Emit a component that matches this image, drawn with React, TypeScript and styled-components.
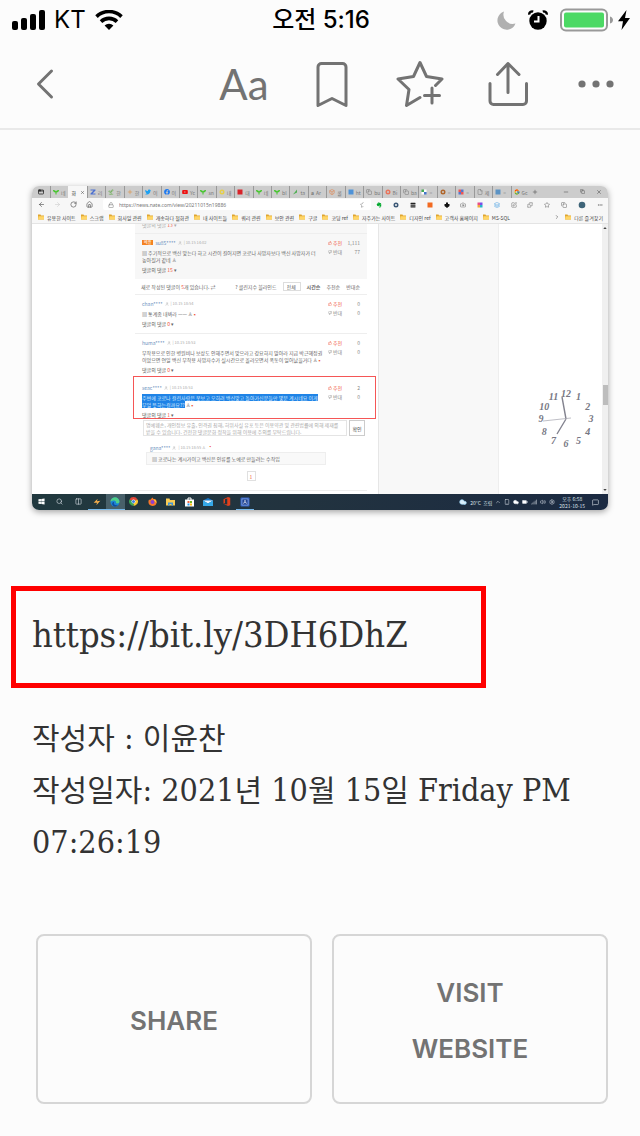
import React from "react";
import styled, { createGlobalStyle, css } from "styled-components";
import {
  AppWindow, ArrowLeft, ArrowRight, BatteryFull, Camera, ChevronRight, ChevronUp, Cloud, Copy, File,
  Home, Layers, Lock, Menu, MessageSquare, Minus, MoreHorizontal, Plus, Puzzle, RotateCw, Search,
  Settings, Signal, Smartphone, SquarePen, Star, StarHalf, ThumbsDown, ThumbsUp, User, Volume2, X,
  Columns2, Box, Sprout,
} from "lucide-react";
import { FaEvernote, FaFacebook, FaTwitter, FaWindows, FaYoutube } from "react-icons/fa";
import { FcGoogle } from "react-icons/fc";

const ink = "#737373";

const Global = createGlobalStyle`
  *, *::before, *::after { box-sizing: border-box; }
  body { margin: 0; background: #fcfcfc; color: #333; font-family: Inter, "Noto Sans CJK KR", sans-serif; }
  button, input, select, textarea { font: inherit; color: inherit; border: 0; padding: 0; margin: 0; background: none; border-radius: 0; }
  a { color: inherit; text-decoration: none; }
  svg { display: block; flex: none; }
`;

/* ---------- status bar ---------- */

const StatusBar = styled.header`
  display: grid;
  grid-template-columns: 1fr auto 1fr;
  align-items: center;
  height: 40px;
  padding: 0 10px 0 12px;
  color: #000;
  font-size: 24px;
  line-height: 40px;
`;
const StatusGroup = styled.div<{ $end?: boolean }>`
  display: flex;
  align-items: center;
  gap: ${(p) => (p.$end ? 12 : 9)}px;
  justify-content: ${(p) => (p.$end ? "flex-end" : "flex-start")};
`;
const Time = styled.time`
  font-weight: 500;
`;
const Power = styled.span`
  display: flex;
  align-items: center;
  gap: 5px;
`;

/* ---------- toolbar ---------- */

const Toolbar = styled.nav`
  display: flex;
  justify-content: space-between;
  border-bottom: 2px solid #e9e9e9;
`;
const ToolGroup = styled.div`
  display: flex;
`;
const ToolButton = styled.button`
  display: flex;
  align-items: center;
  justify-content: center;
  width: 88px;
  height: 88px;
  color: ${ink};
`;
const TextSizeLabel = styled.span`
  font-family: Lato, sans-serif;
  font-weight: 400;
  font-size: 42px;
  line-height: 48px;
`;
const ToolSvg = styled.svg.attrs({ viewBox: "0 0 48 48", width: 48, height: 48, fill: "none", stroke: "currentColor", strokeWidth: 3, strokeLinecap: "round", strokeLinejoin: "round" })``;

/* ---------- article ---------- */

const Article = styled.main`
  padding: 56px 0 32px;
`;
const Shot = styled.figure`
  margin: 0 32px 76px;
  border-radius: 7px;
  overflow: hidden;
  background: #fff;
  box-shadow: 0 2px 6px rgba(0, 0, 0, 0.35);
  font-family: "Noto Sans CJK KR", sans-serif;
  font-size: 5px;
  line-height: 7px;
  color: #666;
  white-space: nowrap;
`;
const LinkBox = styled.p`
  width: 475px;
  max-width: calc(100% - 22px);
  margin: 0 11px 24px;
  padding: 18px 16px 22px;
  border: 5px solid #f00;
`;
const ShortLink = styled.a`
  display: block;
  font-family: "DejaVu Serif Condensed", "DejaVu Serif", serif;
  font-size: 36px;
  line-height: 52px;
`;
const Byline = styled.p`
  margin: 0 32px;
  font-family: "DejaVu Serif Condensed", "DejaVu Serif", serif;
  font-size: 32px;
  line-height: 52px;
`;
const Ko = styled.span`
  font-family: "Noto Sans CJK KR", sans-serif;
  font-size: 30px;
  font-weight: 400;
  line-height: 1;
`;
const Actions = styled.div`
  display: grid;
  grid-template-columns: 1fr 1fr;
  gap: 20px;
  margin: 66px 32px 0 36px;
`;
const ActionButton = styled.button`
  min-height: 170px;
  padding: 4px 64px 0;
  border: 2px solid #d6d6d6;
  border-radius: 8px;
  color: ${ink};
  font-weight: 600;
  font-size: 26px;
  line-height: 56px;
`;

/* ---------- captured desktop ---------- */

const TabStrip = styled.div`
  display: flex;
  align-items: center;
  height: 12px;
  background: #ccc;
`;
const WindowMenu = styled.span`
  display: flex;
  justify-content: center;
  width: 18px;
  color: #222;
`;
const TabList = styled.div`
  display: flex;
  flex: 1;
  height: 12px;
`;
const TabItem = styled.button<{ $active?: boolean }>`
  display: flex;
  flex: 1 1 0;
  min-width: 0;
  overflow: hidden;
  align-items: center;
  gap: 2px;
  padding-left: 2px;
  height: 12px;
  border-left: 1px solid #999;
  color: #777;
  ${(p) => p.$active && css`background: #f7f7f7; border-color: #f7f7f7; color: #333; gap: 4px;`}
`;
const WindowControls = styled.div`
  display: flex;
  align-items: center;
  justify-content: space-between;
  width: 79px;
  padding: 0 6px 0 3px;
  color: #444;
`;
const ControlSet = styled.span`
  display: flex;
  gap: 11px;
`;
const AddressRow = styled.div`
  display: flex;
  align-items: center;
  height: 13px;
  background: #f7f7f7;
`;
const NavSet = styled.div`
  display: flex;
  justify-content: space-around;
  width: 67px;
  padding: 0 2px;
  color: #444;
`;
const AddressField = styled.label`
  display: flex;
  flex: 1;
  align-items: center;
  gap: 5px;
  height: 11px;
  padding: 0 5px;
  margin-left: 4px;
  background: #fff;
  border-radius: 2px;
  color: #777;
`;
const AddressInput = styled.input`
  flex: 1;
  min-width: 0;
  height: 9px;
  font-family: "Noto Sans", sans-serif;
`;
const Extensions = styled.div`
  display: flex;
  justify-content: space-around;
  align-items: center;
  width: 237px;
  color: #666;
`;
const BookmarkRow = styled.div`
  display: flex;
  align-items: center;
  justify-content: space-between;
  height: 13px;
  padding: 0 5px 0 6px;
  background: #f7f7f7;
  border-bottom: 1px solid #e4e4e4;
  color: #444;
`;
const BookmarkSet = styled.div`
  display: flex;
  align-items: center;
  gap: 5px;
`;
const BookmarkLink = styled.a`
  display: flex;
  align-items: center;
  gap: 3px;
`;
const Viewport = styled.div`
  display: grid;
  grid-template-columns: 103fr 232fr 11fr 121fr 103fr 6px;
  height: 270px;
  overflow: hidden;
  background: #fff;
`;
const Comments = styled.section`
  grid-column: 2;
  min-width: 0;
`;
const Pinned = styled.div`
  padding: 1px 0 3px;
  background: #f7f7f7;
`;
const PreviousReplies = styled.div`
  margin-top: -4px;
  padding: 0 7px 5px;
  border-bottom: 1px solid #eee;
  color: #aaa;
`;
const FilterBar = styled.div`
  display: flex;
  align-items: center;
  justify-content: space-between;
  height: 16px;
  padding: 0 7px 0 6px;
  border-bottom: 1px solid #eee;
`;
const FilterSet = styled.div`
  display: flex;
  align-items: center;
  gap: 6px;
`;
const FilterSelect = styled.select`
  appearance: none;
  width: 18px;
  height: 9px;
  padding-left: 3px;
  border: 1px solid #ddd;
  line-height: 7px;
`;
const Entry = styled.article<{ $boxed?: boolean; $last?: boolean }>`
  display: flex;
  justify-content: space-between;
  padding: 5px 7px 6px;
  border-bottom: 1px solid #eee;
  ${(p) => p.$last && css`padding-bottom: 3px; border-bottom: 0;`}
  ${(p) => p.$boxed && css`
    margin: 0 -9px 0 -2px;
    padding: 7px 15px 0 8px;
    border: 1px solid #f55656;
  `}
`;
const EntryBody = styled.div`
  display: grid;
  gap: 3px;
  min-width: 0;
`;
const Meta = styled.div`
  display: flex;
  align-items: center;
  gap: 2px;
  color: #aaa;
  font-size: 4px;
`;
const Author = styled.span`
  color: #6b8fbd;
  font-size: 5px;
`;
const Badge = styled.span`
  padding: 0 2px;
  background: #f58220;
  color: #fff;
  line-height: 5px;
`;
const Said = styled.p`
  margin: 0;
`;
const Hot = styled.span`
  color: #f0563c;
`;
const Marked = styled.mark`
  background: #1f83e6;
  color: #d7eaff;
`;
const Votes = styled.div`
  display: grid;
  grid-template-columns: auto auto;
  justify-content: space-between;
  align-content: start;
  width: 32px;
  margin-top: -1px;
  line-height: 9px;
  text-align: right;
  color: #888;
`;
const Vote = styled.span<{ $up?: boolean }>`
  display: flex;
  align-items: center;
  gap: 1px;
  color: ${(p) => (p.$up ? "#f0563c" : "#888")};
`;
const ReplyForm = styled.form`
  display: flex;
  gap: 2px;
  margin: 1px 2px 8px 8px;
`;
const ReplyText = styled.textarea`
  flex: 1;
  height: 16px;
  padding: 0 2px;
  border: 1px solid #e4e4e4;
  resize: none;
  overflow: hidden;
  font-size: 5px;
  line-height: 7px;
  color: #aaa;
`;
const ReplyButton = styled.button`
  width: 16px;
  height: 16px;
  border: 1px solid #ccc;
  color: #444;
`;
const ReplyMeta = styled.div`
  padding-left: 15px;
`;
const ReplyBubble = styled.div`
  margin: 1px 41px 6px 11px;
  padding: 2px 5px;
  height: 13px;
  border: 1px solid #eee;
  background: #f9f9f9;
`;
const Pager = styled.div`
  display: flex;
  justify-content: center;
  padding-bottom: 9px;
  border-bottom: 1px solid #eee;
`;
const PageButton = styled.button`
  width: 9px;
  height: 10px;
  border: 1px solid #e0e0e0;
  color: #f0563c;
`;
const Aside = styled.div`
  grid-column: 4;
  background: #f8f8f8;
  border-left: 1px solid #e6e6e6;
  border-right: 1px solid #eee;
`;
const ClockColumn = styled.div`
  display: flex;
  justify-content: flex-end;
  padding: 165px 6px 0 0;
`;
const ScrollTrack = styled.div`
  display: flex;
  flex-direction: column;
  align-items: center;
  justify-content: space-between;
  padding: 2px 0;
  background: #f0f0f0;
`;
const ScrollThumb = styled.span`
  width: 5px;
  height: 20px;
  margin-top: 72px;
  background: #bdbdbd;
`;
const Taskbar = styled.div`
  display: flex;
  align-items: center;
  justify-content: space-between;
  height: 16px;
  background: linear-gradient(90deg, #21393f, #22333f 45%, #1b2a42);
  color: #dde3ea;
`;
const TaskSet = styled.div`
  display: flex;
  width: 222px;
`;
const TaskButton = styled.button<{ $open?: boolean; $active?: boolean }>`
  display: flex;
  flex: 1;
  align-items: center;
  justify-content: center;
  height: 16px;
  border-bottom: 1px solid ${(p) => (p.$open ? "#76b9ed" : "transparent")};
  background: ${(p) => (p.$active ? "#48606a" : "transparent")};
`;
const Tray = styled.div`
  display: flex;
  align-items: center;
  gap: 3px;
  padding-right: 9px;
`;
const TrayClock = styled.span`
  margin: 0 4px 0 1px;
  text-align: center;
`;

const Glyph = ({ d, color = "currentColor", size = 6 }: { d: string; color?: string; size?: number }) => (
  <svg width={size} height={size} viewBox="0 0 12 12" aria-hidden="true"><path d={d} fill={color} /></svg>
);
const Folder = () => (
  <svg width="6" height="6" viewBox="0 0 12 12" aria-hidden="true">
    <path d="M0 1h5l1 2h6v8H0z" fill="#dfa52f" /><path d="M1 4.5h11V11H0z" fill="#ffd667" />
  </svg>
);
const Dot = ({ color }: { color: string }) => <Glyph color={color} d="M6 1a5 5 0 100 10A5 5 0 006 1zm0 3a2 2 0 110 4 2 2 0 010-4z" />;
const Square = ({ color }: { color: string }) => <Glyph color={color} d="M1 1h10v10H1z" />;
const Leaf = () => <Glyph color="#45c52c" d="M5 11V7C2 7 0 5 0 2c3 0 5 1 6 3 1-2 3-3 6-3 0 3-2 5-5 5v4z" />;
const Tiles = ({ colors }: { colors: string[] }) => (
  <svg width="6" height="6" viewBox="0 0 12 12" aria-hidden="true">
    {colors.map((c, i) => <rect key={i} x={1 + (i % 2) * 5} y={1 + (i >> 1) * 5} width="5" height="5" fill={c} />)}
  </svg>
);

const tabs: [React.ReactNode, string][] = [
  [<Leaf />, "네"],
  [null, "화"],
  [<Glyph color="#4a6fd0" d="M1 1h10v2L5 9h6v2H1V9l6-6H1z" />, "리"],
  [<Sprout size={6} color="#58a83c" />, "한"],
  [<Plus size={6} color="#e08a2c" />, "한"],
  [<FaTwitter size={6} color="#1da1f2" />, "이"],
  [<FaFacebook size={6} color="#1877f2" />, "이"],
  [<FaYoutube size={6} color="#e11" />, "Yc"],
  [<Leaf />, "sn"],
  [<Dot color="#e6cf4b" />, "내"],
  [<Square color="#d8232a" />, "대"],
  [<Leaf />, "네"],
  [<Leaf />, "bl"],
  [<Glyph color="#4caf50" d="M2 11L10 1v6z" />, "ta"],
  [<b>a</b>, "Ar"],
  [<Box size={6} color="#e37b3c" />, "쿨"],
  [<Square color="#4f93d8" />, "ht"],
  [<Copy size={6} />, "bu"],
  [<Dot color="#e9755c" />, "Bi"],
  [<Copy size={6} />, "ba"],
  [<Tiles colors={["#4a5", "#fff", "#fff", "#47c"]} />, "="],
  [<Dot color="#b0662b" />, "="],
  [<Tiles colors={["#e55", "#57c", "#57c", "#e55"]} />, "="],
  [<File size={6} />, "제"],
  [<Square color="#5c93c4" />, "="],
  [<FcGoogle size={6} />, "Gc"],
];

const bookmarks = ["유용한 사이트", "스크랩", "회사일 관련", "개송하다 철화관", "내 사이트들", "쿼리 관련", "보안 관련", "구글", "코딩 ref", "자주가는 사이트", "디자인 ref", "고객사 홈페이지", "MS-SQL"];

const extensions: React.ReactNode[] = [
  <FaEvernote size={6} color="#00a82d" />, <Dot color="#3c5876" />, <Menu size={6} color="#222" strokeWidth={5} />,
  <Square color="#f26a21" />, <Glyph color="#111" d="M4 1h4v3h3v4l-5 4-5-4V4h3z" />, <Camera size={6} />,
  <Tiles colors={["#e84d8a", "#7b4de8", "#f2a93b", "#28b5c9"]} />, <Layers size={6} color="#3f9be0" />, <SquarePen size={6} />,
  <Puzzle size={6} />, <Star size={6} />, <Copy size={6} />,
  <Glyph size={8} color="#3e6478" d="M6 1a5 5 0 100 10A5 5 0 006 1z" />, <MoreHorizontal size={6} />,
];

const ClockFace = () => (
  <svg width="60" height="60" viewBox="0 0 60 60" role="img" aria-label="시계">
    <g fill="#777783" fontFamily="Liberation Serif, serif" fontSize="10" fontWeight="700" fontStyle="italic" textAnchor="middle">
      {Array.from({ length: 12 }, (_, i) => {
        const a = ((i + 1) * Math.PI) / 6;
        return <text key={i} x={30 + 25 * Math.sin(a)} y={33 - 25 * Math.cos(a)}>{i + 1}</text>;
      })}
    </g>
    <path d="M30 30L26 8M30 30l-9 15" stroke="#83838f" strokeWidth="1.4" />
    <path d="M35 29L7 32" stroke="#a4a4ae" strokeWidth=".7" />
  </svg>
);

interface CommentProps {
  author: string;
  date: string;
  replies: string;
  up: string;
  down: string;
  best?: boolean;
  boxed?: boolean;
  last?: boolean;
  children: React.ReactNode;
}
const Comment = ({ author, date, replies, up, down, best, boxed, last, children }: CommentProps) => (
  <Entry $boxed={boxed} $last={last}>
    <EntryBody>
      <Meta>
        {best && <Badge>베플</Badge>}
        <Author>{author}</Author>
        <User size={4} /> | {date}
      </Meta>
      <Said>{children}</Said>
      <div>댓글의 댓글 <Hot>{replies}</Hot> ▾</div>
    </EntryBody>
    <Votes>
      <Vote $up><ThumbsUp size={4} />추천</Vote><span>{up}</span>
      <Vote><ThumbsDown size={4} />반대</Vote><span>{down}</span>
    </Votes>
  </Entry>
);

const DesktopShot = () => (
  <Shot>
    <TabStrip>
      <WindowMenu><AppWindow size={6} strokeWidth={3} /></WindowMenu>
      <TabList>
        {tabs.map(([icon, label], i) => (
          <TabItem key={i} $active={i === 1}>{icon}{label}{i === 1 && <X size={5} />}</TabItem>
        ))}
      </TabList>
      <WindowControls>
        <Plus size={6} />
        <ControlSet><Minus size={6} /><Copy size={5} /><X size={6} /></ControlSet>
      </WindowControls>
    </TabStrip>
    <AddressRow>
      <NavSet><ArrowLeft size={7} /><ArrowRight size={7} color="#ccc" /><RotateCw size={7} /><Home size={7} /></NavSet>
      <AddressField>
        <Lock size={6} />
        <AddressInput aria-label="주소" defaultValue="https://news.nate.com/view/20211015n19886" />
        <StarHalf size={6} />
      </AddressField>
      <Extensions>{extensions.map((e, i) => <React.Fragment key={i}>{e}</React.Fragment>)}</Extensions>
    </AddressRow>
    <BookmarkRow>
      <BookmarkSet>
        {bookmarks.map((b) => <BookmarkLink href="#" key={b}><Folder />{b}</BookmarkLink>)}
      </BookmarkSet>
      <BookmarkSet>
        <ChevronRight size={6} />
        <BookmarkLink href="#"><Folder />다른 즐겨찾기</BookmarkLink>
      </BookmarkSet>
    </BookmarkRow>
    <Viewport>
      <Comments>
        <Pinned>
          <PreviousReplies>댓글의 댓글 <Hot>13</Hot> ▾</PreviousReplies>
          <Comment best last author="su85****" date="10.15 14:02" replies="15" up="1,111" down="77">
            ▤ 주기적으로 백신 맞는다 하고 시간이 길어지면 코로나 사망자보다 백신 사망자가 더<br />높아질거 같네 ♙
          </Comment>
        </Pinned>
        <FilterBar>
          <span>새로 작성된 댓글이 <Hot>5</Hot>개 있습니다. ⇄</span>
          <FilterSet>
            <span>? 클린지수 블라인드</span>
            <FilterSelect aria-label="클린지수"><option>전체</option></FilterSelect>
            <b>시간순</b><span>추천순</span><span>반대순</span>
          </FilterSet>
        </FilterBar>
        <Comment author="chan****" date="10.15 18:54" replies="0" up="0" down="0">
          ▤ 통계좀 내봐라 ㅡㅡ ♙<Hot>▪</Hot>
        </Comment>
        <Comment last author="huma****" date="10.15 18:53" replies="0" up="0" down="0">
          부작용으로 인한 병원비나 보상도 안해주면서 맞으라고 강요하지 말아라 지금 박근혜정권<br />
          이었으면 연일 백신 부작용 사망자수가 실시간으로 올라오면서 폭동이 일어났을거다 ♙<Hot>▪</Hot>
        </Comment>
        <Comment boxed author="seac****" date="10.15 18:53" replies="1" up="2" down="0">
          <Marked>주변에 코로나 걸린사람은 못보고 오히려 백신맞고 돌아가신분들만 몇분 계시네요 이게<br />무얼 뜻하는걸까요??</Marked> ♙<Hot>▪</Hot>
        </Comment>
        <ReplyForm onSubmit={(e) => e.preventDefault()}>
          <ReplyText aria-label="댓글" defaultValue="명예훼손, 개인정보 유출, 인격권 침해, 허위사실 유포 등은 이용약관 및 관련법률에 의해 제재를 받을 수 있습니다. 건전한 댓글문화 정착을 위해 이용에 주의를 부탁드립니다." />
          <ReplyButton>확인</ReplyButton>
        </ReplyForm>
        <ReplyMeta>
          <Meta><Author>gana****</Author><User size={4} /> | 10.15 18:55 ♙<Hot>▪</Hot></Meta>
        </ReplyMeta>
        <ReplyBubble>▤ 코로나는 계시가이고 백신은 인류를 노예로 만들려는 수작임</ReplyBubble>
        <Pager><PageButton>1</PageButton></Pager>
      </Comments>
      <Aside />
      <ClockColumn><ClockFace /></ClockColumn>
      <ScrollTrack>
        <Glyph size={4} color="#444" d="M6 3l5 6H1z" />
        <ScrollThumb />
        <Glyph size={4} color="#444" d="M6 9L1 3h10z" />
      </ScrollTrack>
    </Viewport>
    <Taskbar>
      <TaskSet>
        <TaskButton aria-label="시작"><FaWindows size={7} color="#fff" /></TaskButton>
        <TaskButton aria-label="검색"><Search size={7} /></TaskButton>
        <TaskButton aria-label="작업 보기"><Columns2 size={7} /></TaskButton>
        <TaskButton aria-label="편집기" $open><Glyph size={8} color="#f5ae4d" d="M1 7l6-6-1 4 5-1-6 7 1-4z" /></TaskButton>
        <TaskButton aria-label="Edge" $open $active>
          <svg width="10" height="10" viewBox="0 0 20 20"><circle cx="10" cy="10" r="9" fill="#1b83d3" /><path d="M1 10a9 9 0 0118-1c0 4-5 5-7 3 1-3-2-6-5-5-3 0-5 2-6 3z" fill="#4fd08a" /><path d="M8 10c-2 4 2 8 8 6-2 3-6 4-9 2-4-3-3-8 1-8z" fill="#104a9e" /></svg>
        </TaskButton>
        <TaskButton aria-label="Chrome">
          <svg width="9" height="9" viewBox="0 0 18 18"><path d="M9 9L1 5a9 9 0 0116 0z" fill="#e4483a" /><path d="M9 9l8-4a9 9 0 01-8 13z" fill="#f9c72f" /><path d="M9 9v9A9 9 0 011 5z" fill="#3ba657" /><circle cx="9" cy="9" r="4" fill="#fff" /><circle cx="9" cy="9" r="3" fill="#3c7de0" /></svg>
        </TaskButton>
        <TaskButton aria-label="Firefox">
          <svg width="9" height="9" viewBox="0 0 18 18"><path d="M2 5l2 1 5-5 2 3 5 1c4 9-2 13-7 13C2 18-1 12 2 5z" fill="#f5762b" /><circle cx="9" cy="10" r="4" fill="#8a3fd0" /><path d="M11 4c5 2 6 5 6 8l-4-4z" fill="#ffd23c" /></svg>
        </TaskButton>
        <TaskButton aria-label="탐색기">
          <svg width="9" height="8" viewBox="0 0 18 16"><path d="M0 1h7l1 3h10v11H0z" fill="#f8cc55" /><path d="M4 9h10v6h-3v-3H7v3H4z" fill="#3f96dc" /></svg>
        </TaskButton>
        <TaskButton aria-label="스토어">
          <svg width="9" height="10" viewBox="0 0 18 20"><path d="M6 6V2h6v4" fill="none" stroke="#fff" strokeWidth="2" /><path d="M0 5h18v14H0z" fill="#fff" /><path d="M5 8h4v4H5z" fill="#e64" /><path d="M10 8h4v4h-4z" fill="#7b2" /><path d="M5 13h4v4H5z" fill="#29e" /><path d="M10 13h4v4h-4z" fill="#fb1" /></svg>
        </TaskButton>
        <TaskButton aria-label="메일">
          <svg width="10" height="8" viewBox="0 0 20 16"><path d="M0 5l10-5 10 5v11H0z" fill="#1976c5" /><path d="M0 5h20L10 11z" fill="#eef6fc" /><path d="M0 5l10 6 10-6v11H0z" fill="#35a9e8" /></svg>
        </TaskButton>
        <TaskButton aria-label="Office"><Glyph size={9} color="#e0401c" d="M2 3l6-3 3 1v10l-3 1-6-3 5 1V2L4 3v5L2 9z" /></TaskButton>
        <TaskButton aria-label="사전" $open>
          <svg width="10" height="10" viewBox="0 0 20 20"><rect x="1" y="1" width="18" height="18" rx="2" fill="#3563c4" /><rect x="4" y="4" width="12" height="12" fill="#1b3f91" stroke="#b9cdf5" /><path d="M7 14l3-8 3 8M8 11h4" fill="none" stroke="#fff" /></svg>
        </TaskButton>
      </TaskSet>
      <Tray>
        <Cloud size={8} color="#9bd3f5" fill="#d9effc" />
        <span>20°C&nbsp; 흐림</span>
        <ChevronUp size={6} /><Smartphone size={6} /><Cloud size={6} fill="#fff" /><BatteryFull size={6} fill="#fff" />
        <Signal size={6} /><Volume2 size={6} /><Settings size={6} />
        <TrayClock>오후 6:58<br />2021-10-15</TrayClock>
        <MessageSquare size={7} />
      </Tray>
    </Taskbar>
  </Shot>
);

export default function App() {
  return (
    <>
      <Global />
      <StatusBar>
        <StatusGroup>
          <svg width="33" height="20" viewBox="0 0 33 20" role="img" aria-label="신호">
            <rect y="11" width="6" height="9" rx="2" /><rect x="9" y="8" width="6" height="12" rx="2" />
            <rect x="18" y="4" width="6" height="16" rx="2" /><rect x="27" width="6" height="20" rx="2" />
          </svg>
          <span>KT</span>
          <svg width="28" height="20" viewBox="0 0 28 20" role="img" aria-label="Wi-Fi">
            <g fill="none" stroke="#000" strokeWidth="3.6"><path d="M1.5 6.6a18 18 0 0125 0" /><path d="M6 11.6a11.5 11.5 0 0116 0" /></g>
            <path d="M14 20l-4.4-4.5a6.3 6.3 0 018.8 0z" />
          </svg>
        </StatusGroup>
        <Time>오전 5:16</Time>
        <StatusGroup $end>
          <svg width="19" height="19" viewBox="0 0 19 19" role="img" aria-label="방해 금지"><path d="M7 .5a9.3 9.3 0 1011.5 12A9.3 9.3 0 017 .5z" fill="#b0b0b0" /></svg>
          <svg width="20" height="20" viewBox="0 0 20 20" role="img" aria-label="알람">
            <circle cx="10" cy="11" r="8.7" /><path d="M10.5 6v5.5H6" fill="none" stroke="#fff" strokeWidth="2" />
            <path d="M1.2 4.6a3 3 0 014-3M18.8 4.6a3 3 0 00-4-3" fill="none" stroke="#000" strokeWidth="2.4" />
          </svg>
          <Power>
            <svg width="53" height="24" viewBox="0 0 53 24" role="img" aria-label="배터리">
              <rect x="1" y="1.5" width="46" height="21" rx="5" fill="none" stroke="#999" strokeWidth="2" />
              <rect x="4" y="4.5" width="40" height="15" rx="2" fill="#4cd964" /><path d="M50 8.5c4 1 4 6 0 7z" fill="#999" />
            </svg>
            <svg width="12" height="20" viewBox="0 0 12 20" role="img" aria-label="충전 중"><path d="M8.5 0L0 11.2h5L3.5 20 12 8H7z" /></svg>
          </Power>
        </StatusGroup>
      </StatusBar>
      <Toolbar>
        <ToolButton aria-label="뒤로"><ToolSvg><path d="M31.5 11L18.5 24l13 13" /></ToolSvg></ToolButton>
        <ToolGroup>
          <ToolButton aria-label="글자 크기"><TextSizeLabel>Aa</TextSizeLabel></ToolButton>
          <ToolButton aria-label="북마크"><ToolSvg><path d="M10 45.5V7a3.5 3.5 0 013.5-3.5h21A3.5 3.5 0 0138 7v38.500L24 38.500z" /></ToolSvg></ToolButton>
          <ToolButton aria-label="즐겨찾기">
            <ToolSvg><path d="M24 37.500L10.500 45.500 13 29.500 2 19l15.500-2.500L24 2.500 30.500 16.500 46 19l-6.500 6.500M28.500 35.500h15M36 28v15" /></ToolSvg>
          </ToolButton>
          <ToolButton aria-label="공유"><ToolSvg><path d="M6 23.500V41a3.500 3.500 0 003.500 3.500H39a3.500 3.500 0 003.500-3.500V23.500M24 3.500v29M13.500 14.500L24 3.500l11 11" /></ToolSvg></ToolButton>
          <ToolButton aria-label="더 보기">
            <ToolSvg><g fill="currentColor" stroke="none"><circle cx="10" cy="24" r="3.6" /><circle cx="24" cy="24" r="3.6" /><circle cx="38" cy="24" r="3.6" /></g></ToolSvg>
          </ToolButton>
        </ToolGroup>
      </Toolbar>
      <Article>
        <DesktopShot />
        <LinkBox><ShortLink href="https://bit.ly/3DH6DhZ">https://bit.ly/3DH6DhZ</ShortLink></LinkBox>
        <Byline>
          <Ko>작성자</Ko> : <Ko>이윤찬</Ko><br />
          <Ko>작성일자</Ko>: 2021<Ko>년</Ko> 10<Ko>월</Ko> 15<Ko>일</Ko> <span>Friday PM</span> <time>07:26:19</time>
        </Byline>
        <Actions>
          <ActionButton>SHARE</ActionButton>
          <ActionButton>VISIT WEBSITE</ActionButton>
        </Actions>
      </Article>
    </>
  );
}
